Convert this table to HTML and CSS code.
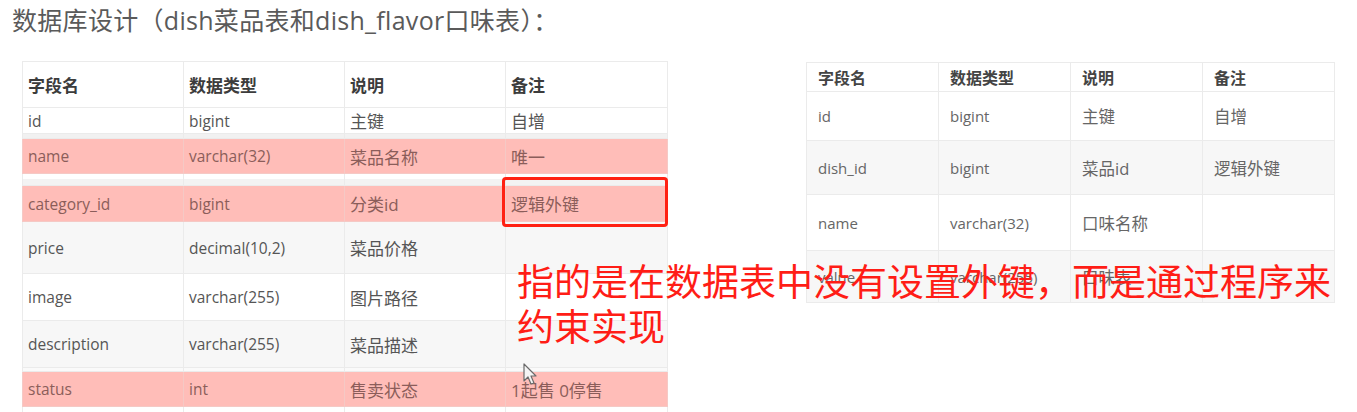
FILE: index.html
```html
<!DOCTYPE html>
<html lang="zh-CN">
<head>
    <meta charset="UTF-8">
    <title>数据库设计</title>
    <link rel="stylesheet" href="styles.css">
</head>
<body>
    <div class="page">
        <h1 class="title">数据库设计（dish菜品表和dish_flavor口味表）：</h1>
        <div class="tables">
            <table class="grid dish">
                <colgroup><col><col><col><col class="last"></colgroup>
                <thead>
                    <tr class="head"><th>字段名</th><th>数据类型</th><th>说明</th><th>备注</th></tr>
                </thead>
                <tbody>
                    <tr class="compact"><td>id</td><td>bigint</td><td>主键</td><td>自增</td></tr>
                    <tr class="gap"><td></td><td></td><td></td><td></td></tr>
                    <tr class="hl"><td>name</td><td>varchar(32)</td><td>菜品名称</td><td>唯一</td></tr>
                    <tr class="gap wide"><td></td><td></td><td></td><td></td></tr>
                    <tr class="hl tall"><td>category_id</td><td>bigint</td><td>分类id</td><td>逻辑外键</td></tr>
                    <tr class="alt big"><td>price</td><td>decimal(10,2)</td><td>菜品价格</td><td></td></tr>
                    <tr class="mid"><td>image</td><td>varchar(255)</td><td>图片路径</td><td></td></tr>
                    <tr class="alt mid"><td>description</td><td>varchar(255)</td><td>菜品描述</td><td></td></tr>
                    <tr class="gap blank"><td></td><td></td><td></td><td></td></tr>
                    <tr class="hl"><td>status</td><td>int</td><td>售卖状态</td><td>1起售 0停售</td></tr>
                    <tr class="tail"><td></td><td></td><td></td><td></td></tr>
                </tbody>
            </table>

            <table class="grid flavor">
                <colgroup><col><col><col><col></colgroup>
                <thead>
                    <tr class="head"><th>字段名</th><th>数据类型</th><th>说明</th><th>备注</th></tr>
                </thead>
                <tbody>
                    <tr class="r1"><td>id</td><td>bigint</td><td>主键</td><td>自增</td></tr>
                    <tr class="alt r2"><td>dish_id</td><td>bigint</td><td>菜品id</td><td>逻辑外键</td></tr>
                    <tr class="r3"><td>name</td><td>varchar(32)</td><td>口味名称</td><td></td></tr>
                    <tr class="alt r4"><td>value</td><td>varchar(255)</td><td>口味表</td><td></td></tr>
                </tbody>
            </table>
        </div>

        <!-- annotations drawn over the slide -->
        <div class="mark"></div>
        <p class="note">指的是在数据表中没有设置外键，而是通过程序来<br>约束实现</p>
        <svg class="cursor" width="16" height="24" viewBox="0 0 16 24">
            <path d="M1 1 L1 18 L5 14 L8 21 L11 20 L8 13 L13 13 Z" fill="#f4f4f4" stroke="#6a6a6a" stroke-width="1.2" stroke-linejoin="round"/>
        </svg>
    </div>
</body>
</html>
```

FILE: styles.css
```css
html, body {
    margin: 0;
    padding: 0;
    background: #fff;
}
body {
    font-family: "Open Sans", "Noto Sans CJK SC", sans-serif;
    color: #555;
    overflow: hidden;
}
.page {
    position: relative;
    width: 1357px;
    height: 412px;
}
.title {
    margin: 0;
    padding: 4px 0 0 12px;
    font-size: 25px;
    line-height: 32px;
    font-weight: 400;
    letter-spacing: 0.3px;
    color: #5a5a5a;
}
.tables {
    display: flex;
    align-items: flex-start;
    gap: 138px;
    padding: 25px 0 0 22px;
}

/* shared table look */
.grid {
    border-collapse: collapse;
    table-layout: fixed;
    background: #fff;
}
.grid th,
.grid td {
    border: 1px solid #ebebeb;
    text-align: left;
    vertical-align: middle;
    white-space: nowrap;
    padding: 0;
}
.grid th {
    font-weight: 700;
    color: #3c3c3c;
}
.grid .alt td { background: #f7f7f7; }

/* dish table */
.dish { width: 645px; }
.dish col { width: 161px; }
.dish col.last { width: 162px; }
.dish th,
.dish td {
    padding: 0 5px;
    font-size: 15.5px;
}
.dish td:nth-child(n+3) { font-size: 17px; }
.dish th { font-size: 17px; }
.dish .head { height: 46px; }
.dish .compact { height: 26px; }
.dish .gap { height: 5px; }
.dish .gap td { background: #f1f1f1; font-size: 0; line-height: 0; }
.dish .gap.wide { height: 12px; }
.dish .gap.wide td { background: #f3f3f3; box-shadow: inset 0 5px 0 #fff; }
.dish .gap.blank { height: 4px; }
.dish .gap.blank td { background: #fafafa; }
.dish .hl { height: 35px; }
.dish .hl td {
    background: #ffbdb8;
    color: #8b5d5a;
    border-color: #f5c9c5;
}
.dish .tall { height: 36px; }
.dish .big { height: 52px; }
.dish .mid { height: 47px; }
.dish .tail { height: 8px; }

/* dish_flavor table */
.flavor {
    width: 528px;
    margin-top: 1px;
}
.flavor col { width: 132px; }
.flavor th,
.flavor td {
    padding: 0 11px;
    font-size: 15px;
    color: #666;
}
.flavor td:nth-child(n+3) { font-size: 16.5px; }
.flavor th { color: #444; font-size: 16px; }
.flavor .head { height: 29px; }
.flavor .r1 { height: 49px; }
.flavor .r2 { height: 54px; }
.flavor .r3 { height: 56px; }
.flavor .r4 { height: 52px; }

/* overlays */
.mark {
    position: absolute;
    left: 502px;
    top: 177px;
    width: 166px;
    height: 50px;
    box-sizing: border-box;
    border: 3px solid #ff2113;
    border-radius: 4px;
}
.note {
    position: absolute;
    left: 517px;
    top: 258px;
    margin: 0;
    font-family: "Noto Sans CJK SC", sans-serif;
    font-size: 37px;
    line-height: 45px;
    color: #ff1d16;
    white-space: nowrap;
}
.cursor {
    position: absolute;
    left: 523px;
    top: 363px;
}
```
